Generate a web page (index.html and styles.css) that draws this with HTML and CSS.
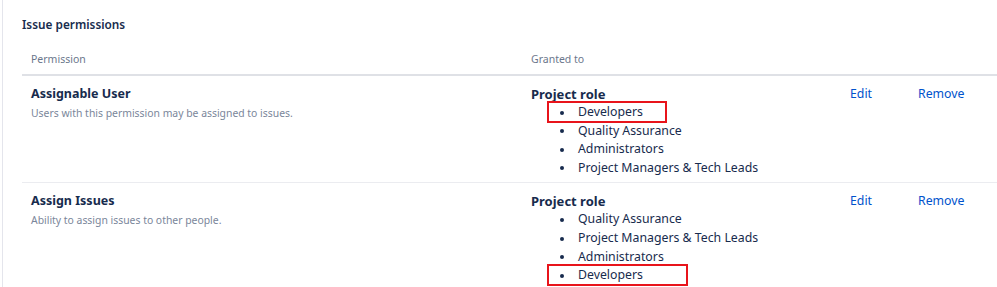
FILE: index.html
```html
<!DOCTYPE html>
<html lang="en">
<head>
    <meta charset="UTF-8">
    <meta name="viewport" content="width=device-width, initial-scale=1.0">
    <title>Issue permissions</title>
    <link rel="stylesheet" href="styles.css">
</head>
<body>

    <div class="page">
        <h2>Issue permissions</h2>

        <div class="perm-table">
            <div class="perm-head">
                <div>Permission</div>
                <div>Granted to</div>
                <div></div>
                <div></div>
            </div>

            <div class="perm-row">
                <div>
                    <div class="perm-name">Assignable User</div>
                    <div class="perm-desc">Users with this permission may be assigned to issues.</div>
                </div>
                <div>
                    <div class="grant-type">Project role</div>
                    <ul class="grant-list">
                        <li class="mark mark-short">Developers</li>
                        <li>Quality Assurance</li>
                        <li>Administrators</li>
                        <li>Project Managers &amp; Tech Leads</li>
                    </ul>
                </div>
                <div><a href="#">Edit</a></div>
                <div><a href="#">Remove</a></div>
            </div>

            <div class="perm-row">
                <div>
                    <div class="perm-name">Assign Issues</div>
                    <div class="perm-desc">Ability to assign issues to other people.</div>
                </div>
                <div>
                    <div class="grant-type">Project role</div>
                    <ul class="grant-list">
                        <li>Quality Assurance</li>
                        <li>Project Managers &amp; Tech Leads</li>
                        <li>Administrators</li>
                        <li class="mark mark-long">Developers</li>
                    </ul>
                </div>
                <div><a href="#">Edit</a></div>
                <div><a href="#">Remove</a></div>
            </div>
        </div>
    </div>

</body>
</html>
```

FILE: styles.css
```css
body {
    margin: 0;
    font-family: "Noto Sans", "Open Sans", sans-serif;
    color: #172b4d;
    background-color: white;
}

.page {
    margin-left: 2px;
    border-left: 1px solid #e4e5ec;
    padding: 16px 0 0 19px;
    min-height: 271px;
}

h2 {
    margin: 0;
    font-size: 11.8px;
    line-height: 17px;
    font-weight: 600;
}

.perm-head,
.perm-row {
    display: grid;
    grid-template-columns: 500px 319px 68px 1fr;
    padding-left: 9px;
}

.perm-head {
    margin-top: 17px;
    padding-bottom: 6px;
    border-bottom: 2px solid #dfe1e6;
    font-size: 10.5px;
    line-height: 18px;
    color: #6b778c;
}

.perm-row {
    padding-top: 9px;
    padding-bottom: 5px;
    border-bottom: 1px solid #ebecf0;
    font-size: 12.3px;
    line-height: 18.6px;
}

.perm-name {
    font-weight: 700;
    font-size: 12.5px;
}

.grant-type {
    font-weight: 700;
    font-size: 13px;
    line-height: 18px;
}

.perm-desc {
    font-size: 10.4px;
    color: #7a869a;
}

.grant-list {
    margin: 0;
    padding-left: 29px;
    list-style: none;
}

.grant-list li::before {
    content: "";
    display: inline-block;
    width: 4px;
    height: 4px;
    margin-right: 14px;
    border-radius: 50%;
    background-color: #172b4d;
    vertical-align: middle;
}

.perm-row a {
    color: #0052cc;
    text-decoration: none;
}

/* red annotation boxes drawn over the screenshot */
.mark {
    position: relative;
}

.mark::after {
    content: "";
    position: absolute;
    left: -13px;
    top: -2px;
    height: 18px;
    border: 2px solid #e8141b;
}

.mark-short::after {
    width: 116px;
}

.mark-long::after {
    width: 137px;
}
```
